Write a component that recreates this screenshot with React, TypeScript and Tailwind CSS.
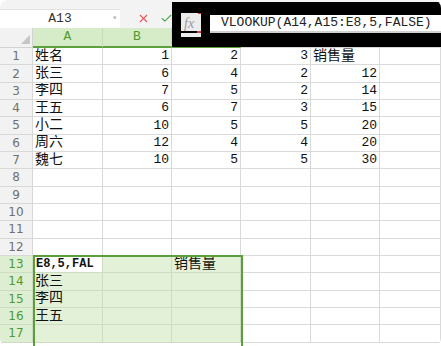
import React from "react";
import { X, Check } from "lucide-react";

const FONT = "font-['Liberation_Mono','Noto_Sans_CJK_SC',monospace]";

// column widths in px: A..F
const COLS = [
  { key: "A", w: "w-[70px]" },
  { key: "B", w: "w-[69px]" },
  { key: "C", w: "w-[69px]" },
  { key: "D", w: "w-[70px]" },
  { key: "E", w: "w-[69px]" },
  { key: "F", w: "w-[61px]" },
];

const DATA: string[][] = [
  ["姓名", "1", "2", "3", "销售量", ""],
  ["张三", "6", "4", "2", "12", ""],
  ["李四", "7", "5", "2", "14", ""],
  ["王五", "6", "7", "3", "15", ""],
  ["小二", "10", "5", "5", "20", ""],
  ["周六", "12", "4", "4", "20", ""],
  ["魏七", "10", "5", "5", "30", ""],
  ["", "", "", "", "", ""],
  ["", "", "", "", "", ""],
  ["", "", "", "", "", ""],
  ["", "", "", "", "", ""],
  ["", "", "", "", "", ""],
  ["E8,5,FAL", "", "销售量", "", "", ""],
  ["张三", "", "", "", "", ""],
  ["李四", "", "", "", "", ""],
  ["王五", "", "", "", "", ""],
  ["", "", "", "", "", ""],
];

const isNum = (v: string) => /^\d+$/.test(v);

function Cell({ value, row, col }: { value: string; row: number; col: number }) {
  const inSel = row >= 13 && col <= 2;
  const active = row === 13 && col === 0;
  const bg = active ? "bg-white" : inSel ? "bg-[#e3f1d8]" : "bg-white";
  const line = inSel ? "border-[#cddcc3]" : "border-[#dadada]";
  const text = active
    ? "justify-start pl-[3px] font-bold text-[12px]"
    : isNum(value)
    ? "justify-end pr-[2px] text-[13px]"
    : "justify-start pl-[2px] text-[14px]";
  return (
    <div
      className={`${COLS[col].w} h-full shrink-0 border-r border-b ${line} ${bg} flex items-center overflow-hidden whitespace-nowrap ${text} text-[#111]`}
    >
      {value}
    </div>
  );
}

export default function App() {
  return (
    <div className={`relative w-[441px] h-[346px] overflow-hidden rounded-[8px] bg-white ${FONT}`}>
      {/* toolbar */}
      <div className="h-[28px] flex items-end bg-[#f3f3f3]">
        <div className="w-[120px] h-[19px] bg-white border-t border-[#e2e2e2] flex items-center relative">
          <span className="w-full text-center text-[13px] text-[#333]">A13</span>
          <span className="absolute right-[3px] top-[2px] text-[8px] text-[#aaa]">▾</span>
        </div>
        <div className="h-[19px] flex items-center gap-[10px] pl-[17px]">
          <X size={13} strokeWidth={2} className="text-[#e25a5a]" />
          <Check size={13} strokeWidth={2} className="text-[#4daa4a]" />
        </div>
      </div>

      {/* column headers */}
      <div className="h-[20px] flex bg-[#f2f2f2]">
        <div className="w-[33px] h-full shrink-0 border-r border-b border-[#d4d4d4] relative">
          <div className="absolute right-[2px] bottom-[3px] w-0 h-0 border-l-[9px] border-l-transparent border-b-[9px] border-b-[#c6c6c6]" />
        </div>
        {COLS.map((c, i) => {
          const sel = i <= 2;
          return (
            <div
              key={c.key}
              className={`${c.w} h-full shrink-0 flex items-center justify-center text-[13px] border-r ${
                sel
                  ? "bg-[#d6ebc8] text-[#4d9a2f] border-[#c6d9b8] border-b-2 border-b-[#5ba23e]"
                  : "text-[#555] border-[#d4d4d4] border-b border-b-[#d4d4d4]"
              }`}
            >
              {c.key}
            </div>
          );
        })}
      </div>

      {/* rows */}
      {DATA.map((r, idx) => {
        const row = idx + 1;
        const sel = row >= 13;
        return (
          <div key={row} className="h-[17.33px] flex">
            <div
              className={`w-[33px] h-full shrink-0 flex items-center justify-center border-r border-b font-['DejaVu_Sans',sans-serif] text-[12px] ${
                sel ? "bg-[#ddeed2] text-[#4f9a33] border-[#cbdcc0]" : "bg-[#f2f2f2] text-[#707070] border-[#d8d8d8]"
              }`}
            >
              {row}
            </div>
            {r.map((v, ci) => (
              <Cell key={ci} value={v} row={row} col={ci} />
            ))}
          </div>
        );
      })}

      {/* selection outline A13:C17 */}
      <div className="absolute left-[33px] top-[255px] w-[210px] h-[100px] border-2 border-[#5b9f3c] pointer-events-none" />

      {/* redaction box over formula bar */}
      <div className="absolute left-[172px] top-[2px] w-[269px] h-[45px] bg-black">
        <div className="absolute left-[9px] top-[11px] w-[20px] h-[24px] bg-[#ececec] overflow-hidden">
          <span className="absolute left-[3px] top-[0px] font-['Liberation_Serif',serif] italic text-[14px] text-[#9a9a9a]">fx</span>
          <div className="absolute left-0 bottom-[4px] w-[16px] h-[2px] bg-black" />
          <div className="absolute right-0 bottom-[4px] w-[4px] h-[2px] bg-[#d04040]" />
          <div className="absolute right-0 top-0 w-[3px] h-[1px] bg-[#d04040]" />
        </div>
        <div className="absolute left-[38px] top-[13px] right-0 h-[18px] bg-white border-b-2 border-[#cfcfcf] flex items-center">
          <span className="pl-[11px] text-[13px] text-[#222] whitespace-nowrap">VLOOKUP(A14,A15:E8,5,FALSE)</span>
        </div>
      </div>
    </div>
  );
}
